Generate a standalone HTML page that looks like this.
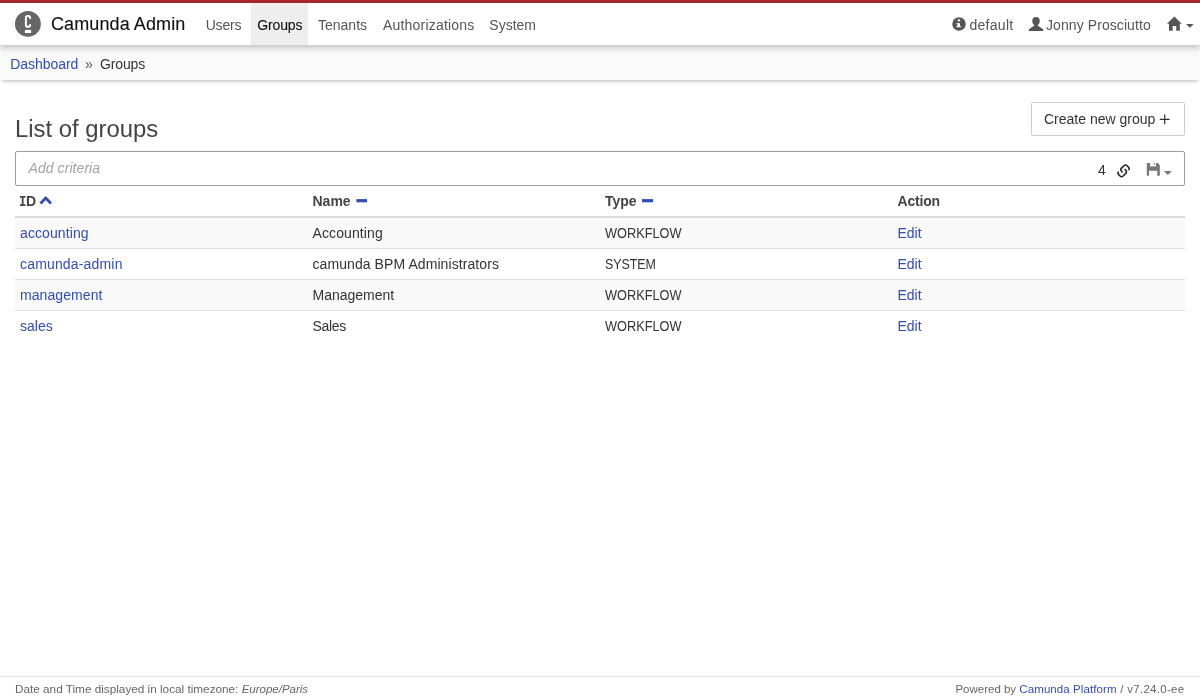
<!DOCTYPE html>
<html lang="en">
<head>
<meta charset="utf-8">
<title>Camunda Admin | Groups</title>
<style>
*{box-sizing:border-box}
html,body{margin:0;padding:0}
body{will-change:transform;width:1200px;height:700px;overflow:hidden;background:#fff;color:#333;font-family:"Liberation Sans",sans-serif;font-size:14px;line-height:20px;position:relative}
a{color:#334db6;text-decoration:none}
.ov{position:absolute;left:0;top:0;z-index:10;pointer-events:none}
.topbar{position:absolute;left:0;top:0;width:1200px;height:3px;background:#a9292e}
.nav{position:absolute;left:0;top:3px;width:1200px;height:42px;background:#fff;box-shadow:0 3px 6px rgba(0,0,0,.22);z-index:3}
.logo{position:absolute;left:15px;top:8px;width:26px;height:26px}
.brand{position:absolute;left:51px;top:9px;font-size:18px;line-height:24px;color:#111;letter-spacing:.1px;white-space:nowrap;-webkit-text-stroke:.12px #111}
.menu{position:absolute;top:0;height:42px;line-height:42px;padding-top:1px;color:#555;white-space:nowrap}
.menu.active{background:#eee;color:#111;-webkit-text-stroke:.1px #111}
.crumbs{position:absolute;left:0;top:45px;width:1200px;height:35px;background:#fafafa;box-shadow:0 3px 4px -2px rgba(0,0,0,.28);z-index:2}
.crumbs span,.crumbs a{position:absolute;top:9px;line-height:20px;white-space:nowrap}
h1{position:absolute;left:15px;top:112.5px;margin:0;font-weight:normal;font-size:23.85px;line-height:32px;color:#444;white-space:nowrap}
.btn{position:absolute;left:1031px;top:102px;width:154px;height:34px;border:1px solid #ccc;border-radius:2px;background:#fff;color:#333}
.btn span{position:absolute;left:12px;top:6px;line-height:20px;white-space:nowrap}
.search{position:absolute;left:15px;top:151px;width:1170px;height:35px;border:1px solid #9c9c9c;border-radius:2px;background:#fff}
.search .ph{position:absolute;left:12.5px;top:6px;letter-spacing:.07px;font-style:italic;color:#a2a2a2;line-height:20px}
.search .cnt{position:absolute;left:1082px;top:8px;line-height:20px;color:#333}
table{position:absolute;left:15px;top:186px;width:1170px;border-collapse:collapse;table-layout:fixed}
th{height:31px;text-align:left;padding:0 5px;font-weight:bold;color:#444;border-bottom:2px solid #ddd;vertical-align:middle}
td{height:31px;padding:0 5px;border-top:1px solid #ddd;vertical-align:middle;white-space:nowrap}
tr.odd td{background:#f9f9f9}
.uc{display:inline-block;transform:scaleX(.91);transform-origin:0 50%}
tbody tr:first-child td{border-top:none}
.footer{position:absolute;left:0;top:676px;width:1200px;height:24px;border-top:1px solid #e5e5e5;font-size:11.5px;color:#666;line-height:16px}
.footer .l{position:absolute;left:15px;top:4.3px;white-space:nowrap}
.footer .r{position:absolute;right:15.5px;top:4.3px;white-space:nowrap}
</style>
</head>
<body>
<svg class="ov" width="1200" height="700" viewBox="0 0 1200 700">
  <!-- logo -->
  <circle cx="27.9" cy="23.9" r="12.95" fill="#666"/>
  <path d="M30.1,19.1V17.8Q30.1,16 28.3,16H27.7Q25.9,16 25.9,17.8V25.05Q25.9,26.85 27.7,26.85H28.3Q30.1,26.85 30.1,25.05V24.25" fill="none" stroke="#fff" stroke-width="2"/>
  <rect x="24.9" y="29.9" width="6.2" height="3.1" fill="#fff"/>
  <!-- info -->
  <circle cx="959" cy="23.9" r="6.75" fill="#555"/>
  <rect x="957.7" y="19.4" width="2.4" height="1.9" fill="#fff"/>
  <path d="M956.25,23.25H960V26.25H961.25V27.3H956.25V26.25H957.5V24.3H956.25Z" fill="#fff"/>
  <!-- user -->
  <ellipse cx="1036" cy="21.1" rx="3.75" ry="4.2" fill="#555"/>
  <path d="M1034.3,24H1037.7V25.6L1043.1,29.25V31H1028.9V29.25L1034.3,25.6Z" fill="#555"/>
  <!-- home -->
  <path d="M1174.4,16.6L1181.7,23.7H1179.8V30.75H1176.25V26H1172.7V30.75H1169V23.7H1166.9Z" fill="#555"/>
  <path d="M1186,24H1193.75L1189.9,27.8Z" fill="#555"/>
  <!-- plus -->
  <path d="M1159.8,119.3H1169.6M1164.7,114.4V124.2" stroke="#333" stroke-width="1.2" fill="none"/>
  <!-- link -->
  <path d="M1122.70,172.40L1121.35,171.05Q1120.00,169.70 1121.56,168.14L1123.94,165.76Q1125.50,164.20 1127.06,165.76L1128.24,166.94Q1129.80,168.50 1129.05,169.25L1128.30,170.00M1124.60,169.10L1125.95,170.45Q1127.30,171.80 1125.74,173.36L1123.16,175.94Q1121.60,177.50 1120.04,175.94L1118.96,174.86Q1117.40,173.30 1118.15,172.55L1118.90,171.80" fill="none" stroke="#222" stroke-width="1.55"/>
  <!-- floppy -->
  <path d="M1146.8,163H1157.9L1159.8,165.2V175.8H1157.25V170.85H1149V175.8H1146.8Z" fill="#777"/>
  <rect x="1150.05" y="162.9" width="6" height="3.5" fill="#fff"/>
  <rect x="1153.8" y="163.1" width="1.05" height="1.75" fill="#777"/>
  <path d="M1163.9,171H1171.8L1167.85,174.9Z" fill="#777"/>
  <!-- sort icons -->
  <path d="M40.5,203.4L45.75,198.1L51,203.4" fill="none" stroke="#334db6" stroke-width="2.8"/>
  <rect x="356.4" y="199.1" width="10.6" height="3.2" fill="#334db6"/>
  <rect x="642" y="199.1" width="11" height="3.2" fill="#334db6"/>
</svg>
<div class="topbar"></div>
<div class="nav">
    <div class="brand">Camunda Admin</div>
  <div class="menu" style="left:205.7px;letter-spacing:-.2px">Users</div>
  <div class="menu active" style="left:251px;width:57px;padding-left:6.3px;letter-spacing:-.15px">Groups</div>
  <div class="menu" style="left:318px">Tenants</div>
  <div class="menu" style="left:383px;letter-spacing:.2px">Authorizations</div>
  <div class="menu" style="left:489.3px">System</div>
  <div class="menu" style="left:969.5px;letter-spacing:.27px">default</div>
  <div class="menu" style="left:1046px;letter-spacing:.08px">Jonny Prosciutto</div>
</div>
<div class="crumbs">
  <a style="left:10.3px;letter-spacing:-.05px">Dashboard</a><span style="left:85px;color:#555">»</span><span style="left:100px;color:#333;letter-spacing:-.15px">Groups</span>
</div>
<h1>List of groups</h1>
<div class="btn"><span>Create new group</span></div>
<div class="search"><span class="ph">Add criteria</span><span class="cnt">4</span></div>
<table>
<colgroup><col style="width:292.5px"><col style="width:292.5px"><col style="width:292.5px"><col style="width:292.5px"></colgroup>
<thead><tr><th><span style="font-family:'Liberation Mono',monospace;display:inline-block;transform:scaleX(.875);transform-origin:0 50%;margin-right:-1.7px;margin-left:-.8px">I</span>D</th><th>Name</th><th>Type</th><th><span style="letter-spacing:-.2px">Action</span></th></tr></thead>
<tbody>
<tr class="odd"><td><a style="letter-spacing:.1px">accounting</a></td><td><span style="letter-spacing:.1px">Accounting</span></td><td><span class="uc">WORKFLOW</span></td><td><a>Edit</a></td></tr>
<tr><td><a style="letter-spacing:.17px">camunda-admin</a></td><td><span style="letter-spacing:.08px">camunda BPM Administrators</span></td><td><span class="uc" style="transform:scaleX(.885)">SYSTEM</span></td><td><a>Edit</a></td></tr>
<tr class="odd"><td><a style="letter-spacing:.08px">management</a></td><td>Management</td><td><span class="uc">WORKFLOW</span></td><td><a>Edit</a></td></tr>
<tr><td><a>sales</a></td><td><span style="letter-spacing:-.3px">Sales</span></td><td><span class="uc">WORKFLOW</span></td><td><a>Edit</a></td></tr>
</tbody>
</table>
<div class="footer"><span class="l"><span style="font-size:11.75px">Date and Time displayed in local timezone: </span><i>Europe/Paris</i></span><span class="r">Powered by <a style="letter-spacing:.09px">Camunda Platform</a><span style="letter-spacing:.3px"> / v7.24.0-ee</span></span></div>
</body>
</html>
